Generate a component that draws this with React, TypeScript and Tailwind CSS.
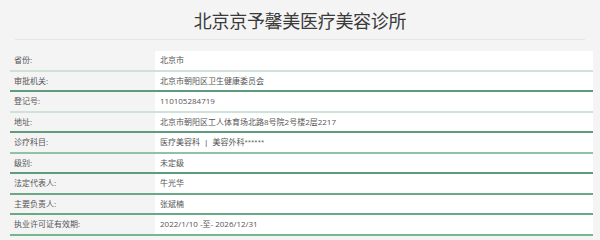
const rows: Array<{ label: string; value: React.ReactNode; border: string }> = [
  { label: '省份:', value: '北京市', border: 'border-b-2 border-[#cfe2d7]' },
  { label: '审批机关:', value: '北京市朝阳区卫生健康委员会', border: 'border-b-2 border-[#5f9c7d]' },
  { label: '登记号:', value: '110105284719', border: 'border-b-2 border-[#cfe2d7]' },
  { label: '地址:', value: '北京市朝阳区工人体育场北路8号院2号楼2层2217', border: 'border-b-2 border-[#5f9c7d]' },
  {
    label: '诊疗科目:',
    value: (
      <>
        医疗美容科 <span className="mx-1 text-[#333]">|</span> 美容外科
        <span className="align-top text-[6px]">******</span>
      </>
    ),
    border: 'border-b-2 border-[#8fc3a3]',
  },
  { label: '级别:', value: '未定级', border: 'border-b-2 border-[#5f9c7d]' },
  { label: '法定代表人:', value: '牛光华', border: 'border-b-2 border-[#6aa888]' },
  { label: '主要负责人:', value: '张斌楠', border: 'border-b-2 border-[#6aa888]' },
  { label: '执业许可证有效期:', value: '2022/1/10 -至- 2026/12/31', border: 'border-b-2 border-[#76b690]' },
]

export default function App() {
  return (
    <div
      className="h-[240px] w-[600px] overflow-hidden bg-[#f4f4f4] text-[#555]"
      style={{ fontFamily: '"Open Sans", "Noto Sans CJK SC", sans-serif' }}
    >
      {/* Title */}
      <div className="mx-[15px] flex h-[40px] items-center justify-center border-b border-[#e6e6e6] pt-[3px]">
        <h1 className="text-[18px] leading-none tracking-[-0.3px] text-[#3a3a3a]">北京京予馨美医疗美容诊所</h1>
      </div>

      {/* Info table */}
      <div className="ml-[10px] mt-[11px] w-[583px]">
        {rows.map(row => (
          <div key={row.label} className={`flex h-[20.5px] box-border ${row.border}`}>
            <div className="flex w-[145px] shrink-0 items-center pl-[4px] text-[8px]">{row.label}</div>
            <div className="flex flex-1 items-center bg-white pl-[5px] text-[8px]">{row.value}</div>
          </div>
        ))}
      </div>
    </div>
  )
}
